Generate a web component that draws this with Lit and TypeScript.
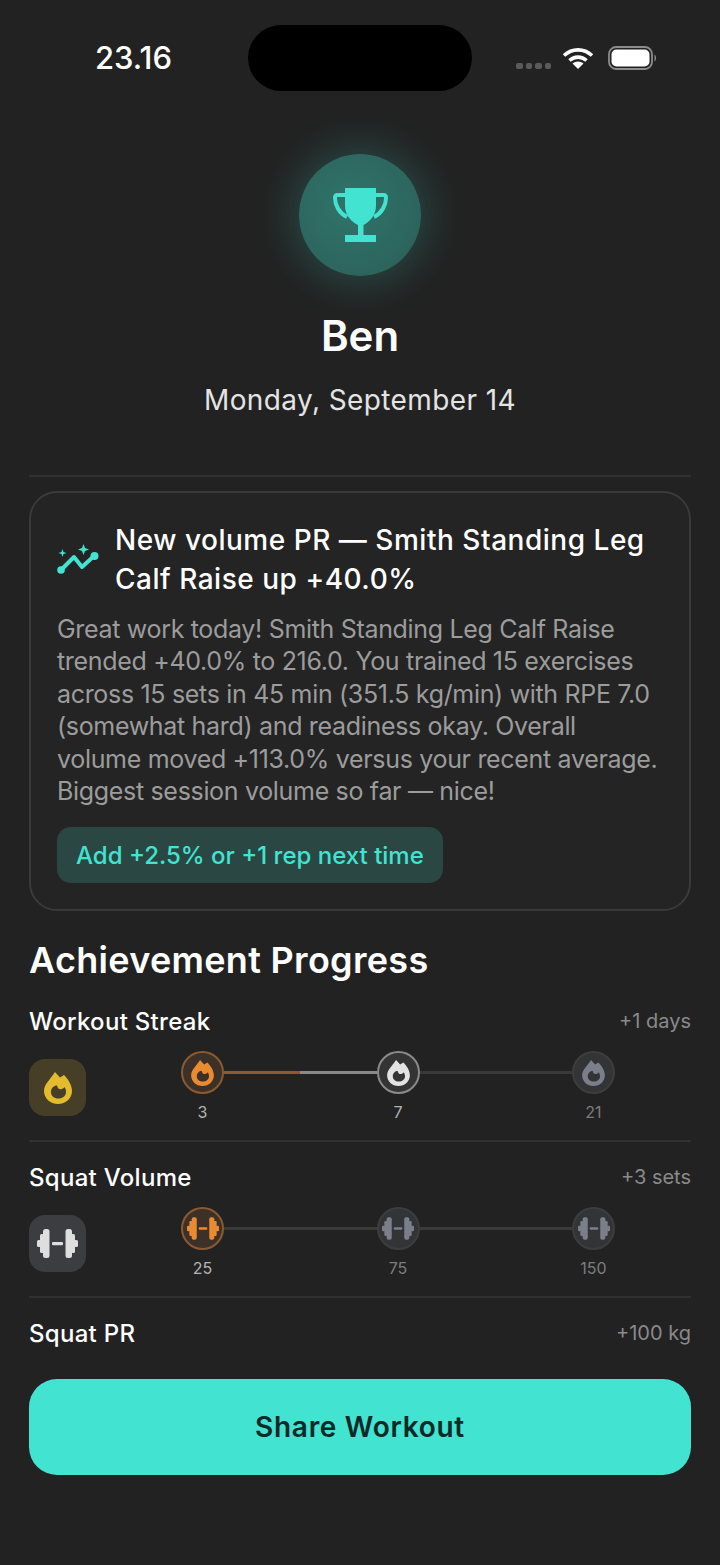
import { LitElement, html, css } from "lit";
import { customElement } from "lit/decorators.js";

const flame = (c: string, w = 28, h = 32) => html`<svg width=${w} height=${h} viewBox="0 0 28 32"><path fill=${c} fill-rule="evenodd" d="M11 0L16 5.500L20 3C23 6 28 12 28 19C28 26 22 32 14 32C6 32 0 26 0 19C0 12 6 8 11 0ZM7 20C7 24 10 26.500 14.500 26.500C18.500 26.500 22 24 22 20C22 18 21.500 16.500 20.500 15C20 16 19 16.500 18 17C15.500 18 13.500 16.500 13 13.500C10 13.500 7 16 7 20Z"/></svg>`;

const bell = (c: string, w = 41, h = 29) => html`<svg width=${w} height=${h} viewBox="0 0 41 29" fill=${c}>
  <rect x="6" y="0" width="6.500" height="29" rx="2.500"/><rect x="3" y="5" width="4" height="19" rx="1.500"/><rect x="0" y="11" width="4" height="7" rx="1.500"/>
  <rect x="15" y="13" width="11" height="3.200" rx="1"/>
  <rect x="28.500" y="0" width="6.500" height="29" rx="2.500"/><rect x="34" y="5" width="4" height="19" rx="1.500"/><rect x="37" y="11" width="4" height="7" rx="1.500"/>
</svg>`;

type Node = { icon: unknown; label: string; cls: string };

const track = (nodes: Node[], segs: unknown[]) => html`
  <div class="track">
    <div class="line">
      ${nodes.map((n, i) => html`<div class="node ${n.cls}">${n.icon}</div>${i < segs.length ? segs[i] : ""}`)}
    </div>
    <div class="labels">${nodes.map((n) => html`<span class="lbl ${n.cls}">${n.label}</span>`)}</div>
  </div>`;

@customElement("app-root")
export class AppRoot extends LitElement {
  static styles = css`
    :host { display: block; width: 720px; height: 1565px; background: #222222; color: #fff; font-family: Inter, "Noto Sans", sans-serif; overflow: hidden; }
    .status { display: flex; align-items: flex-start; height: 91px; padding: 25px 0 0 95px; box-sizing: border-box; }
    .time { width: 153px; flex: none; margin-top: 16px; font-size: 31px; font-weight: 500; line-height: 34px; }
    .island { width: 224px; height: 66px; flex: none; border-radius: 33px; background: #000; }
    .sys { margin: 21px 0 0 44px; display: flex; align-items: center; }
    .dots { display: flex; gap: 3px; margin-top: 16px; margin-right: 11px; }
    .dots i { width: 6.500px; height: 6px; border-radius: 2px; background: #5a5a5a; display: block; }
    .wifi { margin-right: 14px; }
    .hero { display: flex; flex-direction: column; align-items: center; margin-top: 63px; }
    .medal { width: 122px; height: 122px; border-radius: 50%; display: flex; align-items: center; justify-content: center;
      background: radial-gradient(circle at 42% 42%, #30736a 0%, #2b5f58 100%);
      box-shadow: 0 0 40px 8px rgba(64, 227, 208, 0.2); }
    .name { font-size: 42px; font-weight: 600; line-height: 48px; margin-top: 36px; }
    .date { font-size: 28px; font-weight: 400; line-height: 36px; margin-top: 22px; color: #e4e4e4; letter-spacing: 0.4px; }
    .wrap { padding: 0 29px; }
    .rule { height: 2px; background: #323232; }
    .top-rule { margin-top: 57px; }
    .card { margin-top: 14px; border: 2px solid #3a3a3a; border-radius: 28px; padding: 28px 26px 26px 26px; height: 420px; box-sizing: border-box; background: #242424; }
    .head { display: flex; align-items: center; gap: 14px; }
    .head svg { flex: none; }
    .head h2 { margin: 0; font-size: 28px; line-height: 39px; font-weight: 500; letter-spacing: 0.52px; }
    .body { margin: 14px 0 0; font-size: 25px; line-height: 32.400px; color: #9c9c9c; width: 610px; letter-spacing: -0.32px; white-space: pre-line; }
    .chip { display: inline-block; margin-top: 20px; padding: 0 19px; height: 56px; line-height: 58px; border-radius: 14px; background: #2a4743; color: #42e3d1; font-size: 24px; font-weight: 500; }
    h1 { margin: 27px 0 0; font-size: 36px; line-height: 44px; font-weight: 600; letter-spacing: 0.3px; }
    .row-head { display: flex; justify-content: space-between; align-items: center; height: 30px; }
    .row-head b { font-size: 24px; font-weight: 500; letter-spacing: 0.3px; }
    .row-head span { font-size: 20px; color: #8a8a8a; }
    .achv { padding-top: 24px; }
    .achv.next { padding-top: 20px; }
    .grid { display: flex; align-items: flex-start; margin-top: 15px; }
    .tile { width: 57px; height: 57px; border-radius: 16px; margin-top: 8px; flex: none; display: flex; align-items: center; justify-content: center; }
    .tile.gold { background: #463e26; }
    .tile.gray { background: #3c3d40; }
    .track { margin-left: 95px; width: 434px; }
    .line { display: flex; align-items: center; }
    .node { width: 43px; height: 43px; box-sizing: border-box; border-radius: 50%; flex: none; display: flex; align-items: center; justify-content: center; border: 2px solid #3d3d3d; background: #333436; }
    .node.or { background: #3c3028; border-color: #8a5a30; }
    .node.wh { border-color: #8a8a8a; background: #343434; }
    .seg { flex: 1; height: 3px; background: #3a3a3a; }
    .seg.split { background: linear-gradient(90deg, #8a5a30 50%, #8a8a8a 50%); }
    .labels { display: flex; justify-content: space-between; margin-top: 8px; }
    .lbl { width: 43px; text-align: center; font-size: 16px; line-height: 20px; color: #7c7c7c; }
    .lbl.or, .lbl.wh { color: #b4b4b4; }
    .sep { height: 2px; background: #303030; margin-top: 18px; }
    .cta { display: flex; align-items: center; justify-content: center; margin-top: 31px; height: 96px; border-radius: 28px; background: #42e3d1; color: #0b2a27; font-size: 28px; font-weight: 600; letter-spacing: 0.7px; }
  `;

  render() {
    const seg = html`<div class="seg"></div>`;
    return html`
      <div class="status">
        <div class="time">23.16</div>
        <div class="island"></div>
        <div class="sys">
          <div class="dots"><i></i><i></i><i></i><i></i></div>
          <svg class="wifi" width="32" height="24" viewBox="0 0 32 24" fill="none" stroke="#fff" stroke-width="3.600">
            <path d="M2 9.500C10 2 22 2 30 9.500"/><path d="M7.500 14.500C12.500 10 19.500 10 24.500 14.500"/><path fill="#fff" stroke="none" d="M16 23L10.500 17.500C13.500 14.800 18.500 14.800 21.500 17.500Z"/>
          </svg>
          <svg width="49" height="24" viewBox="0 0 49 24">
            <rect x="1" y="1" width="43" height="22" rx="7" fill="none" stroke="#8c8c8c" stroke-width="1.800"/>
            <rect x="3.500" y="3.500" width="38" height="17" rx="5" fill="#fff"/>
            <path d="M46.500 8.500C48.500 9.500 48.500 14.500 46.500 15.500Z" fill="#8c8c8c"/>
          </svg>
        </div>
      </div>

      <div class="hero">
        <div class="medal">
          <svg width="60" height="60" viewBox="0 0 60 60" fill="#42e3d1">
            <path d="M15 3H46V21C46 31 38 38 33.500 40V51H28V40C23 38 15 31 15 21Z"/>
            <path fill="none" stroke="#42e3d1" stroke-width="4" d="M16 10H7.500C5.500 10 5 11 5 13C5 20 9 28 17 32"/>
            <path fill="none" stroke="#42e3d1" stroke-width="4" d="M45 10H53.500C55.500 10 56 11 56 13C56 20 52 28 44 32"/>
            <rect x="15" y="50" width="31" height="7"/>
          </svg>
        </div>
        <div class="name">Ben</div>
        <div class="date">Monday, September 14</div>
      </div>

      <div class="wrap">
        <div class="rule top-rule"></div>
        <div class="card">
          <div class="head">
            <svg width="44" height="36" viewBox="0 3 44 36">
              <path fill="none" stroke="#42e3d1" stroke-width="4" stroke-linejoin="round" d="M4 31L17 18L25 28L37 17"/>
              <circle cx="4" cy="31" r="3.800" fill="#42e3d1"/><circle cx="37.500" cy="17" r="4" fill="#42e3d1"/>
              <path fill="#42e3d1" d="M5.500 10L6.500 13L9.500 14L6.500 15L5.500 18L4.500 15L1.500 14L4.500 13Z"/>
              <path fill="#42e3d1" d="M26.500 5L28 9L32 10.500L28 12L26.500 16L25 12L21 10.500L25 9Z"/>
            </svg>
            <h2>New volume PR — Smith Standing Leg<br />Calf Raise up +40.0%</h2>
          </div>
          <p class="body">Great work today! Smith Standing Leg Calf Raise
trended +40.0% to 216.0. You trained 15 exercises
across 15 sets in 45 min (351.5 kg/min) with RPE 7.0
(somewhat hard) and readiness okay. Overall
volume moved +113.0% versus your recent average.
Biggest session volume so far — nice!</p>
          <span class="chip">Add +2.5% or +1 rep next time</span>
        </div>

        <h1>Achievement Progress</h1>

        <div class="achv">
          <div class="row-head"><b>Workout Streak</b><span>+1 days</span></div>
          <div class="grid">
            <div class="tile gold">${flame("#e2bb2e")}</div>
            ${track(
              [
                { icon: flame("#e88b31", 23, 26), label: "3", cls: "or" },
                { icon: flame("#e3e3e3", 23, 26), label: "7", cls: "wh" },
                { icon: flame("#7b7f8c", 23, 26), label: "21", cls: "" },
              ],
              [html`<div class="seg split"></div>`, seg]
            )}
          </div>
          <div class="sep"></div>
        </div>

        <div class="achv next">
          <div class="row-head"><b>Squat Volume</b><span>+3 sets</span></div>
          <div class="grid">
            <div class="tile gray">${bell("#dedede")}</div>
            ${track(
              [
                { icon: bell("#e88b31", 32, 23), label: "25", cls: "or" },
                { icon: bell("#7b7f8c", 32, 23), label: "75", cls: "" },
                { icon: bell("#7b7f8c", 32, 23), label: "150", cls: "" },
              ],
              [seg, seg]
            )}
          </div>
          <div class="sep"></div>
        </div>

        <div class="achv next">
          <div class="row-head"><b>Squat PR</b><span>+100 kg</span></div>
        </div>

        <div class="cta">Share Workout</div>
      </div>
    `;
  }
}
